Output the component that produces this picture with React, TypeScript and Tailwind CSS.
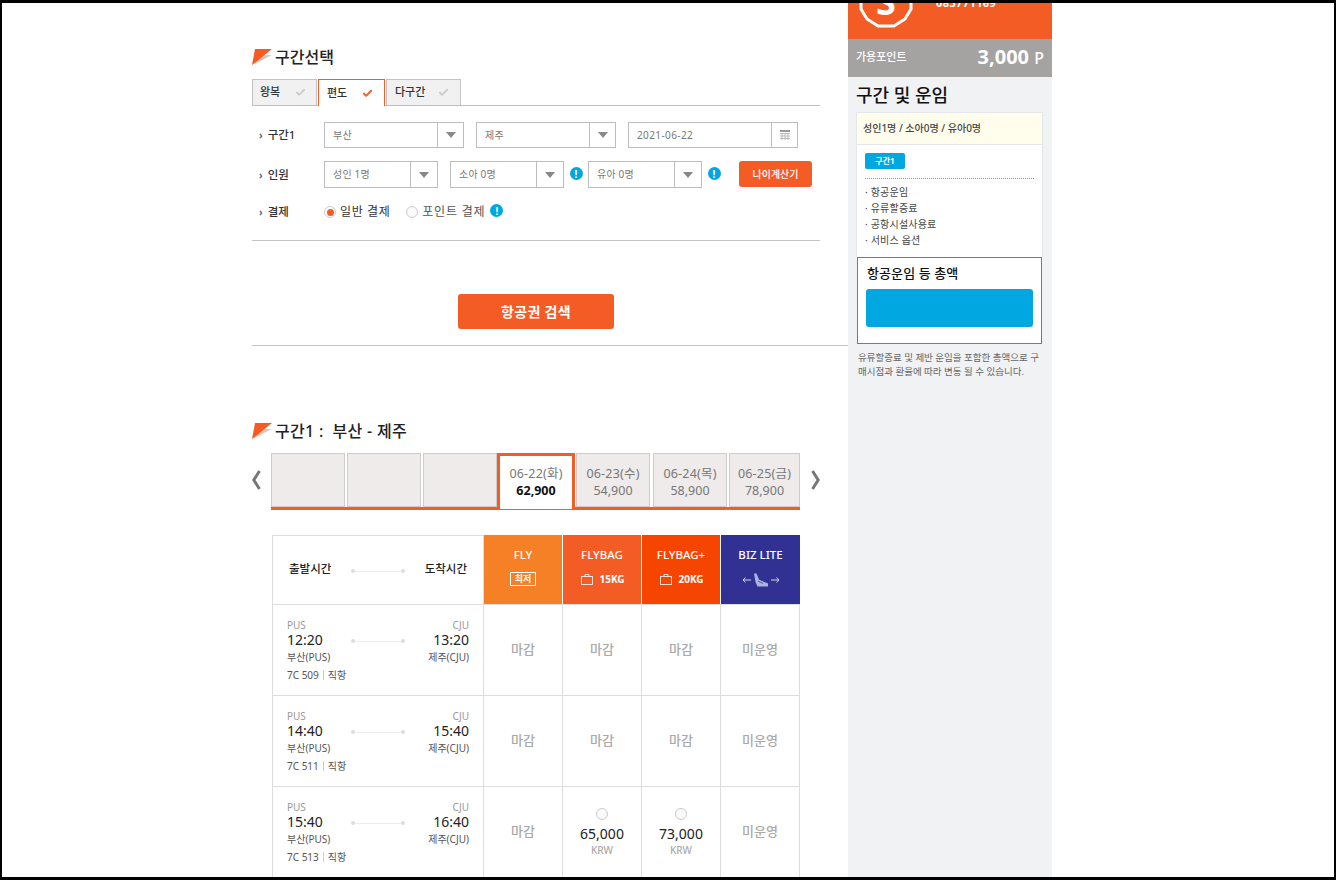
import { Check } from 'lucide-react';

const FONT = "font-['Noto_Sans','Noto_Sans_CJK_KR',sans-serif]";

const DATES = [
  { label: '06-23(수)', price: '54,900', width: 'w-[74px]', margin: 'ml-[1px]' },
  { label: '06-24(목)', price: '58,900', width: 'w-[74px]', margin: 'ml-[3px]' },
  { label: '06-25(금)', price: '78,900', width: 'w-[71px]', margin: 'ml-[2px]' },
];

const FLIGHTS = [
  { dep: '12:20', arr: '13:20', no: '7C 509', fares: ['마감', '마감', '마감', '미운영'] },
  { dep: '14:40', arr: '15:40', no: '7C 511', fares: ['마감', '마감', '마감', '미운영'] },
  { dep: '15:40', arr: '16:40', no: '7C 513', fares: ['마감', '65,000', '73,000', '미운영'] },
];

const Flag = () => (
  <svg width="20" height="16" viewBox="0 0 20 16" className="shrink-0">
    <defs>
      <linearGradient id="flagGrey" x1="0" y1="1" x2="1" y2="0">
        <stop offset="0" stopColor="#f7a27f" />
        <stop offset="1" stopColor="#cfcfcf" />
      </linearGradient>
    </defs>
    <polygon points="0,16 20,6 9,6" fill="url(#flagGrey)" />
    <polygon points="0,16 3,0 20,0" fill="#f45c25" />
  </svg>
);

const Select = ({ text, width, field }: { text: string; width: string; field: string }) => (
  <div className={`flex h-full ${width} border border-[#bdbdbd] bg-white`}>
    <div className={`${field} flex items-center pl-2 text-[10px] tracking-[0.2px] text-[#777]`}>{text}</div>
    <div className="flex flex-1 items-center justify-center border-l border-[#bdbdbd]">
      <div className="h-0 w-0 border-x-[5px] border-t-[6px] border-x-transparent border-t-[#888]" />
    </div>
  </div>
);

const Info = () => (
  <div className="flex h-[13px] w-[13px] shrink-0 items-center justify-center rounded-full bg-[#00a7e1] text-[10px] font-bold leading-none text-white">
    !
  </div>
);

const Label = ({ text }: { text: string }) => (
  <div className="flex w-[65px] items-center pl-[7px] text-[11.5px] font-medium text-[#333]">
    <span className="mr-[5px] text-[10px] font-bold leading-none text-[#666]">›</span>
    {text}
  </div>
);

const Route = () => (
  <div className="flex w-[54px] items-center">
    <div className="h-[4px] w-[4px] rounded-full bg-[#ddd]" />
    <div className="h-px flex-1 bg-[#eee]" />
    <div className="h-[4px] w-[4px] rounded-full bg-[#ddd]" />
  </div>
);

const Bag = () => (
  <svg width="12" height="11" viewBox="0 0 12 11" fill="none" stroke="#fff" strokeWidth="0.9" className="opacity-90">
    <rect x="0.5" y="2.5" width="11" height="8" />
    <path d="M4 2.5V0.5H8V2.5" />
  </svg>
);

const Seat = () => (
  <svg width="38" height="14" viewBox="0 0 38 14" fill="none">
    <path d="M9 7H1M3.5 4.5L1 7L3.5 9.5M29 7H37M34.5 4.5L37 7L34.5 9.5" stroke="#d5d7ee" strokeWidth="1" />
    <path d="M12 0.5H14.5L17 6.5L20 8L26 10.5V13.5H15.5L13.5 9Z" fill="#aeb2dd" />
    <path d="M16 8L21 10.5" stroke="#303193" strokeWidth="0.7" />
  </svg>
);

const Fare = ({ value }: { value: string }) => {
  if (value === '마감' || value === '미운영') {
    return <div className="text-[13px] font-medium text-[#aaa]">{value}</div>;
  }
  return (
    <div className="flex flex-col items-center">
      <div className="h-[12px] w-[12px] rounded-full border border-[#ccc] bg-[#fafafa]" />
      <div className="mt-[4px] text-[14px] leading-[20px] text-[#222]">{value}</div>
      <div className="text-[10px] font-medium leading-[13px] text-[#aaa]">KRW</div>
    </div>
  );
};

export default function App() {
  return (
    <div className={`${FONT} h-[880px] w-[1336px] overflow-hidden border-x-2 border-y-[3px] border-black bg-white`}>
      <div className="flex h-full pl-[250px]">
        {/* Main column */}
        <div className="w-[596px] shrink-0">
          <div className="h-[44px]" />
          <div className="flex h-[20px] items-center gap-[3px]">
            <Flag />
            <h2 className="text-[16px] font-medium leading-none text-[#222]">구간선택</h2>
          </div>

          {/* Trip type tabs */}
          <div className="mt-[12px] flex h-[27px] w-[568px] items-stretch gap-px border-b border-[#bdbdbd] text-[11px] font-medium text-[#333]">
            <div className="flex h-[26px] w-[65px] items-center justify-between border border-b-0 border-[#c4c4c4] bg-[#f1f1f1] pl-[7px] pr-[10px]">
              왕복 <Check size={11} strokeWidth={4} className="text-[#ccc]" />
            </div>
            <div className="flex h-[27px] w-[67px] items-center justify-between border border-b-0 border-[#f45c25] bg-white pl-[8px] pr-[11px]">
              편도 <Check size={11} strokeWidth={4} className="text-[#f45c25]" />
            </div>
            <div className="flex h-[26px] w-[75px] items-center justify-between border border-b-0 border-[#c4c4c4] bg-[#f1f1f1] pl-[8px] pr-[11px]">
              다구간 <Check size={11} strokeWidth={4} className="text-[#ccc]" />
            </div>
          </div>

          {/* Search form */}
          <div className="mt-[16px] flex h-[26px] w-[568px]">
            <Label text="구간1" />
            <div className="ml-[7px] flex h-full gap-[12px]">
              <Select text="부산" width="w-[140px]" field="w-[112px]" />
              <Select text="제주" width="w-[140px]" field="w-[112px]" />
              <div className="flex h-full w-[170px] border border-[#bdbdbd]">
                <div className="flex w-[142px] items-center pl-2 text-[10px] tracking-[0.4px] text-[#777]">2021-06-22</div>
                <div className="flex flex-1 items-center justify-center border-l border-[#bdbdbd]">
                  <svg width="10" height="10" viewBox="0 0 10 10">
                    <rect width="10" height="2" fill="#999" />
                    <path d="M0 3.5H10M0 6H10M0 8.5H10M2 3V10M5 3V10M8 3V10" stroke="#bbb" strokeWidth="1" />
                  </svg>
                </div>
              </div>
            </div>
          </div>
          <div className="mt-[13px] flex h-[27px] w-[568px] items-center">
            <Label text="인원" />
            <div className="ml-[7px] flex h-full items-center">
              <Select text="성인 1명" width="w-[114px]" field="w-[85px]" />
              <div className="w-[12px]" />
              <Select text="소아 0명" width="w-[114px]" field="w-[85px]" />
              <div className="flex w-[24px] justify-center pb-[2px]"><Info /></div>
              <Select text="유아 0명" width="w-[114px]" field="w-[85px]" />
              <div className="flex w-[24px] justify-center pb-[2px]"><Info /></div>
              <button className="ml-[13px] h-[26px] w-[73px] self-start rounded-[3px] bg-[#f45c25] text-[10px] font-medium text-white">
                나이계산기
              </button>
            </div>
          </div>
          <div className="mt-[15px] flex h-[18px] items-center">
            <Label text="결제" />
            <div className="ml-[7px] flex items-center text-[12px] text-[#333]">
              <div className="flex h-[12px] w-[12px] items-center justify-center rounded-full border border-[#ccc] bg-white">
                <div className="h-[7px] w-[7px] rounded-full bg-[#f45c25]" />
              </div>
              <span className="ml-[4px] tracking-[0.6px]">일반 결제</span>
              <div className="ml-[16px] h-[12px] w-[12px] rounded-full border border-[#ccc] bg-[#fafafa]" />
              <span className="ml-[4px] tracking-[0.8px] text-[#555]">포인트 결제</span>
              <div className="mb-[3px] ml-[5px]"><Info /></div>
            </div>
          </div>
          <div className="mt-[19px] w-[568px] border-t border-[#c4c4c4]" />

          <div className="flex w-[568px] justify-center pt-[53px]">
            <button className="h-[35px] w-[156px] rounded-[3px] bg-[#f45c25] text-[14px] font-semibold tracking-[0.3px] text-white">
              항공권 검색
            </button>
          </div>
          <div className="mt-[16px] border-t border-[#c4c4c4]" />

          {/* Segment */}
          <div className="mt-[75px] flex h-[20px] items-center gap-[3px]">
            <Flag />
            <h2 className="whitespace-pre text-[16px] font-medium leading-none tracking-[0.3px] text-[#222]">구간1 :  부산 - 제주</h2>
          </div>

          {/* Date strip */}
          <div className="mt-[12px] flex h-[57px] items-stretch">
            <div className="flex w-[19px] items-center pb-[3px]">
              <svg width="9" height="20" viewBox="0 0 9 20" fill="none" stroke="#777" strokeWidth="3">
                <path d="M7.5 1L1.8 10L7.5 19" />
              </svg>
            </div>
            <div className="flex w-[529px] border-b-[3px] border-[#f45c25]">
              <div className="flex">
                <div className="h-[54px] w-[74px] border border-[#ccc] bg-[#eeebea]" />
                <div className="ml-[2px] h-[54px] w-[74px] border border-[#ccc] bg-[#eeebea]" />
                <div className="ml-[2px] h-[54px] w-[74px] border border-[#ccc] bg-[#eeebea]" />
              </div>
              <div className="relative z-10 flex h-[56px] w-[78px] flex-col items-center border-x-[3px] border-t-[3px] border-[#f45c25] bg-white pt-[9px]">
                <div className="whitespace-nowrap text-[12.5px] leading-[17px] tracking-[0.2px] text-[#777]">06-22(화)</div>
                <div className="text-[12.5px] font-bold leading-[18px] text-[#111]">62,900</div>
              </div>
              {DATES.map((d) => (
                <div key={d.label} className={`${d.width} ${d.margin} flex h-[54px] flex-col items-center border border-[#ccc] bg-[#eeebea] pt-[11px]`}>
                  <div className="whitespace-nowrap text-[12.5px] leading-[17px] tracking-[0.2px] text-[#777]">{d.label}</div>
                  <div className="text-[12.5px] leading-[18px] text-[#777]">{d.price}</div>
                </div>
              ))}
            </div>
            <div className="flex w-[30px] items-center pb-[3px] pl-[11px]">
              <svg width="9" height="20" viewBox="0 0 9 20" fill="none" stroke="#777" strokeWidth="3">
                <path d="M1.5 1L7.2 10L1.5 19" />
              </svg>
            </div>
          </div>

          {/* Fare table */}
          <div className="ml-[20px] mt-[25px] w-[528px]">
            <div className="flex h-[70px] border-b border-[#ddd]">
              <div className="flex w-[212px] shrink-0 items-center justify-between border-x border-t border-[#ddd] pb-[3px] pl-[16px] pr-[16px] text-[11.5px] font-medium text-[#222]">
                <span>출발시간</span>
                <span className="pt-[5px]"><Route /></span>
                <span>도착시간</span>
              </div>
              <div className="flex w-[78px] shrink-0 flex-col items-center bg-[#f58025] pt-[11px] text-[11.5px] font-medium text-white">
                <div className="leading-[18px]">FLY</div>
                <div className="mt-[8px] border border-white px-[4px] text-[9px] font-bold leading-[12px]">최저</div>
              </div>
              <div className="ml-px flex w-[78px] shrink-0 flex-col items-center bg-[#f45c25] pt-[11px] text-[11.5px] font-medium text-white">
                <div className="leading-[18px]">FLYBAG</div>
                <div className="ml-[2px] mt-[8px] flex items-center gap-[6px] text-[10px] font-bold leading-[14px]"><Bag />15KG</div>
              </div>
              <div className="ml-px flex w-[78px] shrink-0 flex-col items-center bg-[#f54500] pt-[11px] text-[11.5px] font-medium text-white">
                <div className="leading-[18px]">FLYBAG+</div>
                <div className="ml-[2px] mt-[8px] flex items-center gap-[6px] text-[10px] font-bold leading-[14px]"><Bag />20KG</div>
              </div>
              <div className="ml-px flex w-[79px] shrink-0 flex-col items-center bg-[#303193] pt-[11px] text-[11.5px] font-medium text-white">
                <div className="leading-[18px]">BIZ LITE</div>
                <div className="mt-[9px]"><Seat /></div>
              </div>
            </div>
            {FLIGHTS.map((f) => (
              <div key={f.no} className="flex h-[91px] border-b border-[#ddd]">
                <div className="flex w-[212px] shrink-0 border-x border-[#ddd] px-[14px] pt-[14px]">
                  <div className="flex w-full flex-col">
                    <div className="flex items-start justify-between">
                      <div>
                        <div className="text-[10px] leading-[13px] text-[#999]">PUS</div>
                        <div className="text-[14px] leading-[16px] text-[#222]">{f.dep}</div>
                        <div className="mt-[2px] text-[10px] leading-[14px] text-[#555]">부산(PUS)</div>
                      </div>
                      <div className="pr-[2px] pt-[20px]"><Route /></div>
                      <div className="text-right">
                        <div className="text-[10px] leading-[13px] text-[#999]">CJU</div>
                        <div className="text-[14px] leading-[16px] text-[#222]">{f.arr}</div>
                        <div className="mt-[2px] text-[10px] leading-[14px] text-[#555]">제주(CJU)</div>
                      </div>
                    </div>
                    <div className="mt-[4px] flex items-center text-[10px] leading-[14px] text-[#555]">
                      {f.no}
                      <span className="mx-[4px] h-[10px] w-px bg-[#ccc]" />
                      직항
                    </div>
                  </div>
                </div>
                {f.fares.map((fare, i) => (
                  <div key={i} className="flex w-[79px] shrink-0 items-center justify-center border-r border-[#ddd]">
                    <Fare value={fare} />
                  </div>
                ))}
              </div>
            ))}
          </div>
        </div>

        {/* Fare summary sidebar */}
        <aside className="h-full w-[204px] shrink-0 bg-[#f1f2f4]">
          <div className="flex h-[36px] overflow-hidden bg-[#f45c25] pl-[11px]">
            <svg width="54" height="54" viewBox="0 0 54 54" className="-mt-[28px] shrink-0" fill="none">
              <polygon points="19,2 35,1 46,7 52,18 52,34 46,44 35,51 19,51 8,44 2,34 2,18 8,7" stroke="#fff" strokeWidth="3" />
              <text x="27" y="40" textAnchor="middle" fontSize="36" fontWeight="700" fill="#fff">S</text>
            </svg>
            <div className="-mt-[7px] ml-[23px] text-[11px] font-bold leading-[14px] tracking-[0.4px] text-white">083771169</div>
          </div>
          <div className="flex h-[38px] items-center justify-between bg-[#a5a2a2] pb-[2px] pl-[8px] pr-[8px] text-white">
            <span className="text-[11px] font-medium">가용포인트</span>
            <span className="text-[20px] font-bold leading-none">3,000 <span className="text-[16px] font-medium">P</span></span>
          </div>
          <h3 className="pl-[8px] pt-[6px] text-[18px] font-medium leading-[24px] text-[#111]">구간 및 운임</h3>
          <div className="ml-[8px] mt-[5px] w-[187px] border border-b-0 border-[#e6e7ea] bg-white">
            <div className="flex h-[32px] items-center border-b border-[#e6e7ea] bg-[#fffdeb] pl-[6px] text-[10px] font-medium text-[#444]">
              성인1명 / 소아0명 / 유아0명
            </div>
            <div className="h-[112px] px-[8px] pt-[8px]">
              <div className="flex h-[16px] w-[40px] items-center justify-center rounded-[2px] bg-[#00a7e1] text-[8px] font-bold text-white">구간1</div>
              <div className="mt-[9px] border-t border-dotted border-[#999]" />
              <ul className="mt-[5px] text-[10px] leading-[16px] tracking-[0.2px] text-[#444]">
                <li>· 항공운임</li>
                <li>· 유류할증료</li>
                <li>· 공항시설사용료</li>
                <li>· 서비스 옵션</li>
              </ul>
            </div>
          </div>
          <div className="ml-[9px] h-[87px] w-[185px] border border-[#1b9ad0] bg-white px-[8px] pt-[6px]">
            <div className="pl-px text-[13px] font-medium leading-[18px] tracking-[0.1px] text-[#111]">항공운임 등 총액</div>
            <div className="mt-[7px] h-[38px] rounded-[3px] bg-[#00a7e1]" />
          </div>
          <p className="break-all px-[10px] pt-[7px] text-[9.5px] leading-[14px] text-[#666]">
            유류할증료 및 제반 운임을 포함한 총액으로 구매시점과 환율에 따라 변동 될 수 있습니다.
          </p>
        </aside>
      </div>
    </div>
  );
}
